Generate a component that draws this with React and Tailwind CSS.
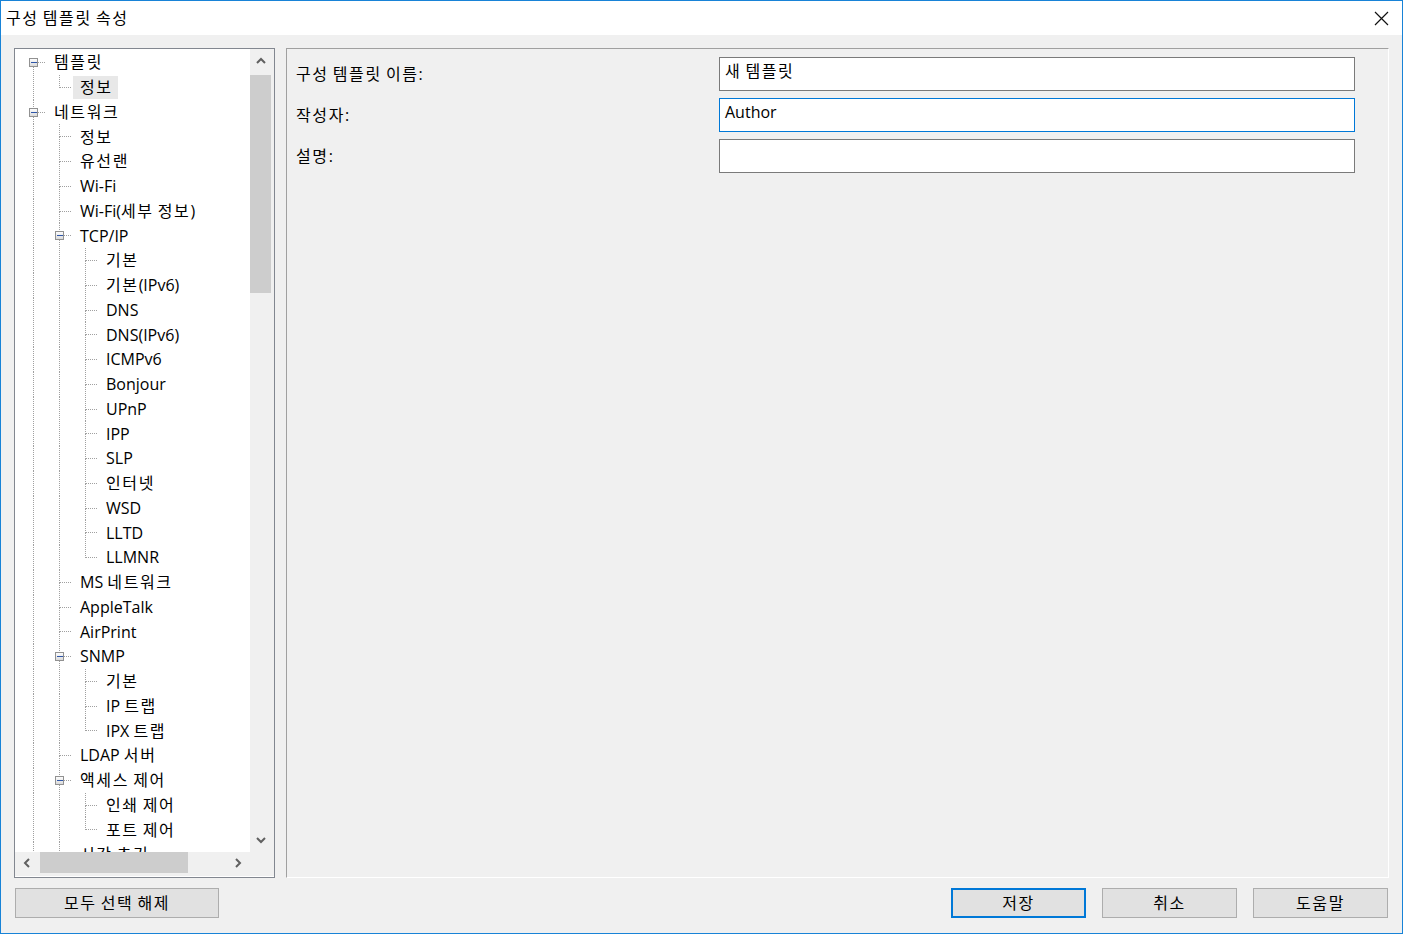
import React from 'react'

const TREE = [
  { label: '템플릿', children: [{ label: '정보', selected: true }] },
  {
    label: '네트워크',
    more: true,
    children: [
      { label: '정보' },
      { label: '유선랜' },
      { label: 'Wi-Fi' },
      { label: 'Wi-Fi(세부 정보)' },
      {
        label: 'TCP/IP',
        children: [
          { label: '기본' },
          { label: '기본(IPv6)' },
          { label: 'DNS' },
          { label: 'DNS(IPv6)' },
          { label: 'ICMPv6' },
          { label: 'Bonjour' },
          { label: 'UPnP' },
          { label: 'IPP' },
          { label: 'SLP' },
          { label: '인터넷' },
          { label: 'WSD' },
          { label: 'LLTD' },
          { label: 'LLMNR' },
        ],
      },
      { label: 'MS 네트워크' },
      { label: 'AppleTalk' },
      { label: 'AirPrint' },
      {
        label: 'SNMP',
        children: [{ label: '기본' }, { label: 'IP 트랩' }, { label: 'IPX 트랩' }],
      },
      { label: 'LDAP 서버' },
      {
        label: '액세스 제어',
        children: [{ label: '인쇄 제어' }, { label: '포트 제어' }],
      },
      { label: '시간 초기', more: true },
    ],
  },
]

// flatten the tree into rows, keeping which ancestor columns still need a guide line
const flatten = (nodes, depth, guides, out) => {
  nodes.forEach((n, i) => {
    const last = i === nodes.length - 1 && !n.more
    out.push({ ...n, depth, guides, last, first: depth === 0 && i === 0 })
    if (n.children) flatten(n.children, depth + 1, [...guides, !last], out)
  })
  return out
}

const ROWS = flatten(TREE, 0, [], [])
const COL = 26
const ROW_H = 24.75
const MID = 12.5

// hangul in the original font runs wider than Noto's, so space those runs out a little
const HANGUL = /([\uAC00-\uD7A3]+)/
const K = ({ children }) => (
  <span>
    {String(children)
      .split(HANGUL)
      .map((s, i) =>
        HANGUL.test(s) ? (
          <span key={i} className="tracking-[1.6px]">
            {s}
          </span>
        ) : (
          s
        )
      )}
  </span>
)

const TreeLines = ({ row }) => {
  const w = (row.depth + 1) * COL
  const cx = row.depth * COL + 13.5
  const dot = { stroke: '#a0a0a0', strokeWidth: 1, strokeDasharray: '1 1', shapeRendering: 'crispEdges' }
  return (
    <svg width={w} height={ROW_H} className="shrink-0 overflow-visible">
      {row.guides.map((g, j) =>
        g ? <line key={j} x1={j * COL + 13.5} x2={j * COL + 13.5} y1={0} y2={ROW_H} {...dot} /> : null
      )}
      {!row.first && <line x1={cx} x2={cx} y1={0} y2={MID} {...dot} />}
      {!row.last && <line x1={cx} x2={cx} y1={MID} y2={ROW_H} {...dot} />}
      <line x1={cx} x2={w} y1={MID} y2={MID} {...dot} />
      {row.children && (
        <g>
          <defs>
            <linearGradient id="boxg" x1="0" y1="0" x2="0" y2="1">
              <stop offset="0" stopColor="#ffffff" />
              <stop offset="1" stopColor="#d8d8d8" />
            </linearGradient>
          </defs>
          <rect x={cx - 4} y={MID - 4} width={8} height={8} fill="url(#boxg)" stroke="#919191" shapeRendering="crispEdges" />
          <line x1={cx - 2.5} x2={cx + 3.5} y1={MID} y2={MID} stroke="#2f56a8" strokeWidth={1} shapeRendering="crispEdges" />
        </g>
      )}
    </svg>
  )
}

const Chevron = ({ dir }) => {
  const pts = {
    up: '1,7 5,3 9,7',
    down: '1,3 5,7 9,3',
    left: '7,1 3,5 7,9',
    right: '3,1 7,5 3,9',
  }[dir]
  return (
    <svg width="10" height="10" viewBox="0 0 10 10">
      <polyline points={pts} fill="none" stroke="#606060" strokeWidth="2" />
    </svg>
  )
}

const Button = ({ children, primary, className = '' }) => (
  <div
    className={`h-[30px] flex items-center justify-center bg-[#e1e1e1] text-[16px] text-black ${
      primary ? 'border-2 border-[#0078d7]' : 'border border-[#adadad]'
    } ${className}`}
  >
    <K>{children}</K>
  </div>
)

const Field = ({ label, value, focused }) => (
  <div className="flex items-center">
    <div className="w-[423px] text-[16px] text-black">
      <K>{label}</K>
    </div>
    <div
      className={`w-[636px] h-[34px] bg-white border flex items-center pl-[5px] pb-[6px] text-[16px] text-black ${
        focused ? 'border-[#0078d7]' : 'border-[#7a7a7a]'
      }`}
    >
      <K>{value}</K>
    </div>
  </div>
)

export default function App() {
  return (
    <div className="w-[1403px] h-[934px] border border-[#1883d7] bg-[#f0f0f0] flex flex-col overflow-hidden text-black font-['Open_Sans','Noto_Sans_CJK_KR',sans-serif]">
      {/* title bar */}
      <div className="h-[34px] shrink-0 bg-white flex items-center justify-between pl-[5px] pr-[13px]">
        <span className="text-[16px]">
          <K>구성 템플릿 속성</K>
        </span>
        <svg width="15" height="15" viewBox="0 0 15 15">
          <path d="M1 1 L14 14 M14 1 L1 14" stroke="#111" strokeWidth="1.2" fill="none" />
        </svg>
      </div>

      {/* main area */}
      <div className="flex pl-[13px] pt-[13px]">
        {/* tree box */}
        <div className="w-[261px] h-[830px] border border-[#828790] bg-white flex flex-col">
          <div className="flex h-[803px]">
            <div className="w-[235px] overflow-hidden pl-[5px] pt-[1px] text-[16px]">
              {ROWS.map((row, i) => (
                <div key={i} className="h-[24.75px] flex items-center whitespace-nowrap">
                  <TreeLines row={row} />
                  <span
                    className={`ml-[1px] pl-[7px] pr-[5px] h-[23px] flex items-center leading-none ${
                      row.selected ? 'bg-[#e8e8e8]' : ''
                    }`}
                  >
                    <K>{row.label}</K>
                  </span>
                </div>
              ))}
            </div>
            <div className="w-[24px] bg-[#f0f0f0] flex flex-col">
              <div className="h-[24px] flex items-center justify-center pr-[3px]">
                <Chevron dir="up" />
              </div>
              <div className="mt-[2px] w-[21px] h-[218px] bg-[#cdcdcd]" />
              <div className="flex-1" />
              <div className="h-[24px] flex items-center justify-center pr-[3px]">
                <Chevron dir="down" />
              </div>
            </div>
          </div>
          <div className="h-[24px] flex bg-[#f0f0f0]">
            <div className="w-[235px] flex">
              <div className="w-[24px] h-[21px] flex items-center justify-center">
                <Chevron dir="left" />
              </div>
              <div className="ml-[1px] w-[148px] h-[21px] bg-[#cdcdcd]" />
              <div className="flex-1" />
              <div className="w-[24px] h-[21px] flex items-center justify-center">
                <Chevron dir="right" />
              </div>
            </div>
            <div className="w-[24px]" />
          </div>
        </div>

        {/* property panel */}
        <div className="ml-[11px] w-[1103px] h-[830px] border border-l-[#a0a0a0] border-t-[#a0a0a0] border-r-white border-b-white flex flex-col gap-[7px] pl-[9px] pt-[8px]">
          <Field label="구성 템플릿 이름:" value="새 템플릿" />
          <Field label="작성자:" value="Author" focused />
          <Field label="설명:" value="" />
        </div>
      </div>

      {/* buttons */}
      <div className="flex mt-[10px] pl-[14px] pr-[14px]">
        <Button className="w-[204px]">모두 선택 해제</Button>
        <div className="ml-auto flex gap-[16px]">
          <Button className="w-[135px]" primary>
            저장
          </Button>
          <Button className="w-[135px]">취소</Button>
          <Button className="w-[135px]">도움말</Button>
        </div>
      </div>
    </div>
  )
}
